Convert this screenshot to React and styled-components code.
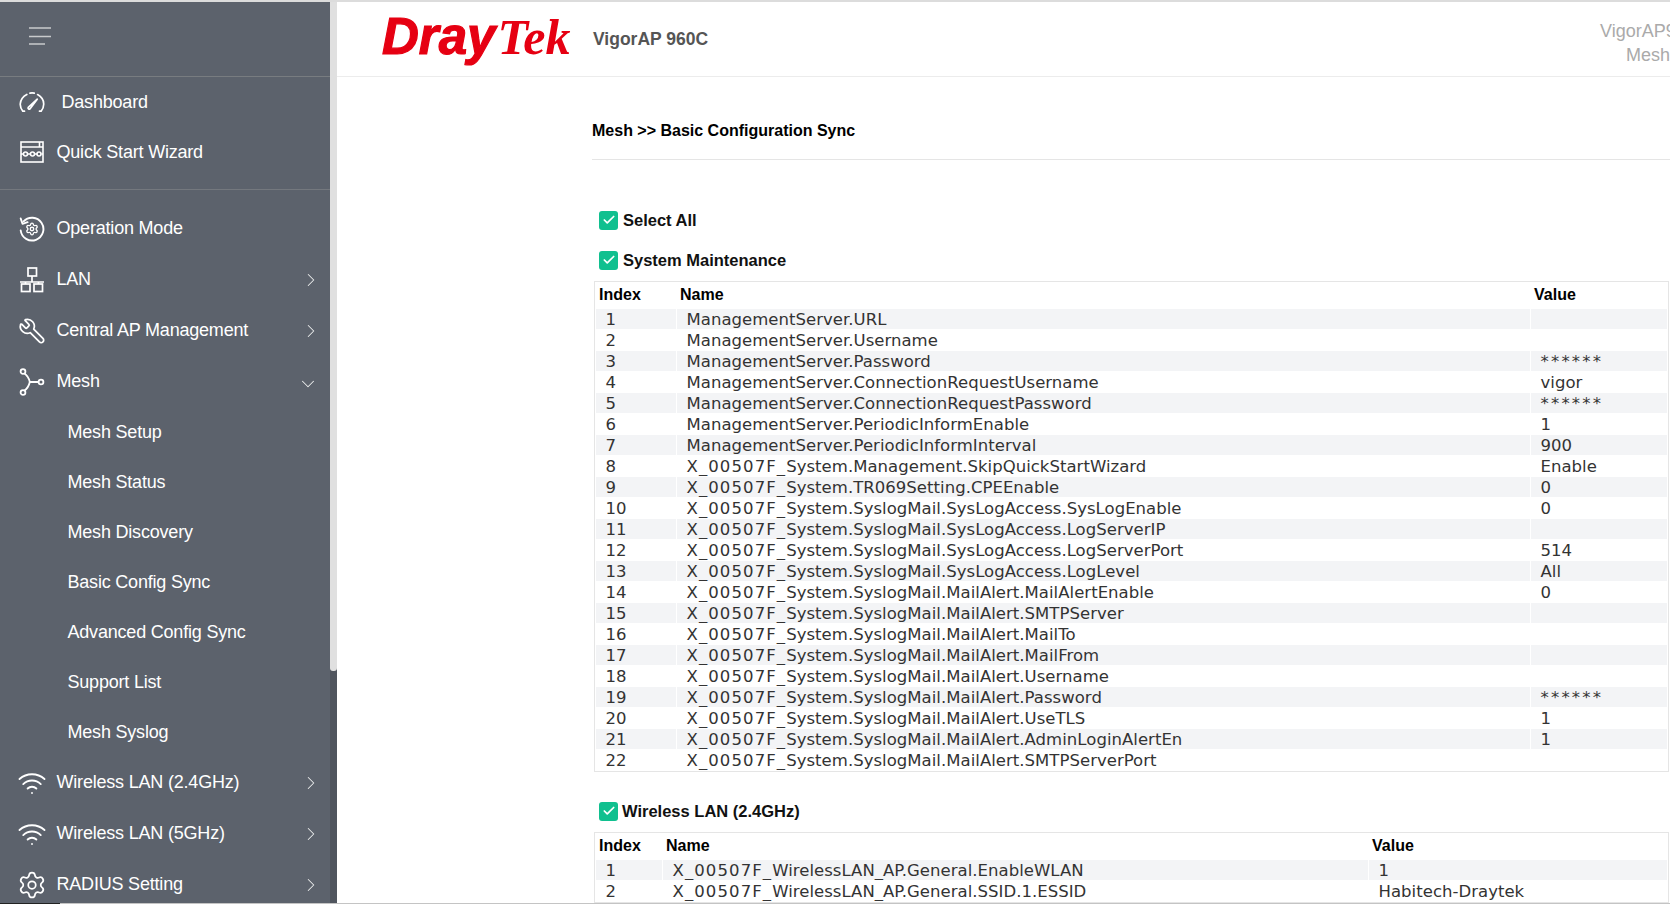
import { Wrench, Wifi, Settings, ChevronRight, ChevronDown, Check } from "lucide-react";
import styled, { createGlobalStyle } from "styled-components";

const GlobalStyle = createGlobalStyle`
  html, body {
    margin: 0;
    padding: 0;
    height: 100%;
    overflow: hidden;
    background: #fff;
    font-family: "Liberation Sans", Arial, sans-serif;
  }
`;

const Page = styled.div`
  display: flex;
  flex-direction: column;
  height: 904px;
  overflow: hidden;
  border-top: 2px solid #dcdcdc;
  box-sizing: border-box;
`;
const Body = styled.div`
  display: flex;
  flex: 1;
  min-height: 0;
`;
const BottomEdge = styled.div`
  flex: none;
  height: 1px;
  background: linear-gradient(to right, #222 60px, #c4c4c4 60px);
`;

const Sidebar = styled.aside`
  flex: none;
  width: 330px;
  background: #5c626c;
  color: #fff;
  overflow: hidden;
`;
const ScrollTrack = styled.div`
  flex: none;
  width: 7px;
  background: #50555e;
`;
const ScrollThumb = styled.div`
  height: 669px;
  background: #e0e0e0;
  border-radius: 0 0 3px 3px;
`;
const BurgerBar = styled.div`
  display: flex;
  align-items: center;
  height: 75px;
  box-sizing: border-box;
  padding: 0 0 6px 28px;
  border-bottom: 1px solid #787c80;
`;
const Group = styled.div`
  padding: ${(p) => (p.$top ? "13px" : "0")} 0 ${(p) => (p.$bottom ? "12px" : "0")};
  border-bottom: ${(p) => (p.$bottom ? "1px solid #74787e" : "none")};
`;
const NavRow = styled.div`
  display: flex;
  align-items: center;
  height: ${(p) => p.$h || 51}px;
  padding-left: 18.5px;
  padding-right: 8px;
  font-size: 18px;
  letter-spacing: -0.2px;
`;
const NavIcon = styled.span`
  display: flex;
  align-items: center;
  justify-content: center;
  width: 26px;
  height: 26px;
  margin-right: ${(p) => p.$gap || 12}px;
  svg {
    flex: none;
    transform: ${(p) => (p.$flip ? "scaleX(-1)" : "none")};
  }
`;
const NavLabel = styled.span`
  flex: 1;
`;
const ChevronWrap = styled.span`
  display: flex;
  margin: ${(p) => (p.$open ? "4px 3px 0 0" : "0")};
`;
const SubRow = styled.div`
  display: flex;
  align-items: center;
  height: 50px;
  padding-left: 67.5px;
  font-size: 18px;
  letter-spacing: -0.2px;
`;

const Main = styled.main`
  flex: 1;
  min-width: 0;
  overflow: hidden;
`;
const TopBar = styled.header`
  display: flex;
  align-items: center;
  height: 74px;
  border-bottom: 1px solid #ececec;
  padding-left: 45px;
`;
const Logo = styled.div`
  display: flex;
  align-items: baseline;
  width: 186px;
  margin-right: 25px;
  padding-bottom: 5px;
  color: #e60012;
  font-style: italic;
  font-weight: bold;
  line-height: 1;
`;
const LogoDray = styled.span`
  font-size: 51px;
  -webkit-text-stroke: 1.2px #e60012;
`;
const LogoTek = styled.span`
  font-family: "Liberation Serif", serif;
  font-size: 50px;
  margin-left: 2px;
`;
const Model = styled.div`
  font-size: 17.5px;
  font-weight: bold;
  color: #555;
`;
const Device = styled.div`
  margin-left: auto;
  width: 70px;
  flex: none;
  padding-top: 7px;
  font-size: 18px;
  line-height: 24px;
  color: #aaa;
  white-space: nowrap;
`;
const DeviceLine = styled.div`
  padding-left: ${(p) => p.$indent || 0}px;
`;

const Content = styled.div`
  margin-left: 255px;
`;
const Title = styled.h1`
  margin: 0;
  height: 83px;
  padding-top: 43px;
  box-sizing: border-box;
  border-bottom: 1px solid #e5e5e5;
  font-size: 16px;
  line-height: 22px;
  font-weight: bold;
  color: #000;
`;
const CheckRow = styled.div`
  display: flex;
  align-items: center;
  gap: ${(p) => p.$gap || 5}px;
  height: 20px;
  padding-left: 7px;
  margin-top: ${(p) => p.$top}px;
  font-size: 16.5px;
  font-weight: bold;
  color: #111;
`;
const Box = styled.span`
  display: flex;
  align-items: center;
  justify-content: center;
  width: 19px;
  height: 19px;
  border-radius: 3px;
  background: #10c08f;
  color: #fff;
`;
const Table = styled.table`
  table-layout: fixed;
  width: 1075px;
  margin: ${(p) => p.$top}px 0 0 2px;
  border: 1px solid #e5e5e5;
  border-spacing: 1px;
  box-sizing: border-box;
`;
const Th = styled.th`
  width: ${(p) => p.$w}px;
  height: 25px;
  padding: 0 0 2px 3px;
  box-sizing: border-box;
  text-align: left;
  font-size: 16px;
  font-weight: bold;
  color: #000;
`;
const Tr = styled.tr`
  background: ${(p) => (p.$odd ? "#f3f4f6" : "transparent")};
`;
const Td = styled.td`
  height: 20px;
  box-sizing: border-box;
  padding: 1px 0 0 9.5px;
  font-family: "DejaVu Sans", Verdana, sans-serif;
  font-size: 16.5px;
  letter-spacing: 0.03px;
  line-height: 19px;
  color: #333;
  white-space: nowrap;
  overflow: hidden;
`;
const Prefix = styled.span`
  letter-spacing: 1.1px;
`;
const Masked = styled.span`
  letter-spacing: 2.2px;
`;

const GaugeIcon = () => (
  <svg width="26" height="20" viewBox="0 0 26 20" fill="none" stroke="#fff" strokeWidth="1.7" strokeLinecap="round" strokeLinejoin="round">
    <path d="M5.5 19.2H3.8C1.9 16.6 1 14.2 1.3 11.6 1.7 7.8 4.2 4.3 7.8 2.4" />
    <path d="M11 1.2c1.4-.3 2.8-.3 4.2 0" />
    <path d="M18.6 2.6c3.6 2 6 5.4 6.1 9.2 .1 2.6-.8 5.1-2.6 7.4h-1.6" />
    <path d="M9.3 15.3c-.8 1.2.6 2.4 1.8 1.5L18.2 7.2 9.3 15.3z" />
  </svg>
);

const WizardIcon = () => (
  <svg width="24" height="22" viewBox="0 0 24 22" fill="none" stroke="#fff" strokeWidth="1.6">
    <rect x="1" y="1" width="22" height="20" />
    <path d="M1 6h22M19.5 1v5" />
    <path d="M1 13h2M8 13h2M15 13h2M21.5 13H23" />
    <circle cx="5.5" cy="13" r="2" />
    <circle cx="12.5" cy="13" r="2" />
    <circle cx="19" cy="13" r="2" />
  </svg>
);

const ModeIcon = () => (
  <svg width="26" height="26" viewBox="0 0 26 26" fill="none" stroke="#fff" strokeWidth="1.9" strokeLinecap="round" strokeLinejoin="round">
    <path d="M4.6 5.4A11.4 11.4 0 1 1 1.7 14.5" />
    <path d="M1.7 2.5 3.5 7.8 8.6 6.2" />
    <Settings x="6" y="6" width="14" height="14" strokeWidth="2.2" />
  </svg>
);

const LanIcon = () => (
  <svg width="26" height="26" viewBox="0 0 26 26" fill="none" stroke="#fff" strokeWidth="1.7">
    <rect x="9" y="1" width="8.5" height="8" />
    <path d="M13 9v6M1 15h24" />
    <rect x="2.5" y="17" width="8.5" height="7.5" />
    <rect x="15" y="17" width="8.5" height="7.5" />
    <path d="M6.5 15v2M19.5 15v2" />
  </svg>
);

const MeshIcon = () => (
  <svg width="26" height="28" viewBox="0 0 26 28" fill="none" stroke="#fff" strokeWidth="1.8">
    <circle cx="4" cy="3.5" r="2.4" />
    <circle cx="4" cy="24.5" r="2.4" />
    <circle cx="22" cy="14" r="2.4" />
    <path d="M5.5 5.5C8.5 7.5 10 10.5 10.8 14 10 17.5 8.5 20.5 5.5 22.5M10.8 14h8.8" />
  </svg>
);

const MenuIcon = () => (
  <svg width="24" height="20" viewBox="0 0 24 20" fill="none" stroke="#c8cacc" strokeWidth="1.6">
    <path d="M1 2h22M1 10.5h22M1 18h16" />
  </svg>
);

const Chevron = ({ open }) => (
  <ChevronWrap $open={open}>
    {open ? (
      <ChevronDown size={22} strokeWidth={1.1} color="#eceded" />
    ) : (
      <ChevronRight size={22} strokeWidth={1.1} color="#eceded" />
    )}
  </ChevronWrap>
);

const CheckBox = () => (
  <Box>
    <Check size={14} strokeWidth={3} />
  </Box>
);

const SUB_ITEMS = ["Mesh Setup", "Mesh Status", "Mesh Discovery", "Basic Config Sync", "Advanced Config Sync", "Support List", "Mesh Syslog"];

const SYSTEM_ROWS = [
  ["ManagementServer.URL", ""],
  ["ManagementServer.Username", ""],
  ["ManagementServer.Password", "******"],
  ["ManagementServer.ConnectionRequestUsername", "vigor"],
  ["ManagementServer.ConnectionRequestPassword", "******"],
  ["ManagementServer.PeriodicInformEnable", "1"],
  ["ManagementServer.PeriodicInformInterval", "900"],
  ["X_00507F_System.Management.SkipQuickStartWizard", "Enable"],
  ["X_00507F_System.TR069Setting.CPEEnable", "0"],
  ["X_00507F_System.SyslogMail.SysLogAccess.SysLogEnable", "0"],
  ["X_00507F_System.SyslogMail.SysLogAccess.LogServerIP", ""],
  ["X_00507F_System.SyslogMail.SysLogAccess.LogServerPort", "514"],
  ["X_00507F_System.SyslogMail.SysLogAccess.LogLevel", "All"],
  ["X_00507F_System.SyslogMail.MailAlert.MailAlertEnable", "0"],
  ["X_00507F_System.SyslogMail.MailAlert.SMTPServer", ""],
  ["X_00507F_System.SyslogMail.MailAlert.MailTo", ""],
  ["X_00507F_System.SyslogMail.MailAlert.MailFrom", ""],
  ["X_00507F_System.SyslogMail.MailAlert.Username", ""],
  ["X_00507F_System.SyslogMail.MailAlert.Password", "******"],
  ["X_00507F_System.SyslogMail.MailAlert.UseTLS", "1"],
  ["X_00507F_System.SyslogMail.MailAlert.AdminLoginAlertEn", "1"],
  ["X_00507F_System.SyslogMail.MailAlert.SMTPServerPort", ""],
];

const WIRELESS_ROWS = [
  ["X_00507F_WirelessLAN_AP.General.EnableWLAN", "1"],
  ["X_00507F_WirelessLAN_AP.General.SSID.1.ESSID", "Habitech-Draytek"],
];

const PREFIX = "X_00507F_";

const NameText = ({ name }) =>
  name.startsWith(PREFIX) ? (
    <>
      <Prefix>{PREFIX}</Prefix>
      {name.slice(PREFIX.length)}
    </>
  ) : (
    name
  );

const ConfigTable = ({ rows, top, widths }) => (
  <Table $top={top}>
    <thead>
      <tr>
        <Th $w={widths[0]}>Index</Th>
        <Th $w={widths[1]}>Name</Th>
        <Th>Value</Th>
      </tr>
    </thead>
    <tbody>
      {rows.map(([name, value], i) => (
        <Tr key={name} $odd={i % 2 === 0}>
          <Td>{i + 1}</Td>
          <Td><NameText name={name} /></Td>
          <Td>{value === "******" ? <Masked>{value}</Masked> : value}</Td>
        </Tr>
      ))}
    </tbody>
  </Table>
);

const App = () => (
  <Page>
    <GlobalStyle />
    <Body>
      <Sidebar>
        <BurgerBar>
          <MenuIcon />
        </BurgerBar>
        <Group $bottom>
          <NavRow $h={50}>
            <NavIcon $gap={17}><GaugeIcon /></NavIcon>
            <NavLabel>Dashboard</NavLabel>
          </NavRow>
          <NavRow $h={50}>
            <NavIcon><WizardIcon /></NavIcon>
            <NavLabel>Quick Start Wizard</NavLabel>
          </NavRow>
        </Group>
        <Group $top>
          <NavRow>
            <NavIcon><ModeIcon /></NavIcon>
            <NavLabel>Operation Mode</NavLabel>
          </NavRow>
          <NavRow>
            <NavIcon><LanIcon /></NavIcon>
            <NavLabel>LAN</NavLabel>
            <Chevron />
          </NavRow>
          <NavRow>
            <NavIcon $flip><Wrench size={28} strokeWidth={1.5} /></NavIcon>
            <NavLabel>Central AP Management</NavLabel>
            <Chevron />
          </NavRow>
          <NavRow>
            <NavIcon><MeshIcon /></NavIcon>
            <NavLabel>Mesh</NavLabel>
            <Chevron open />
          </NavRow>
          {SUB_ITEMS.map((item) => (
            <SubRow key={item}>{item}</SubRow>
          ))}
          <NavRow>
            <NavIcon><Wifi size={30} strokeWidth={1.5} /></NavIcon>
            <NavLabel>Wireless LAN (2.4GHz)</NavLabel>
            <Chevron />
          </NavRow>
          <NavRow>
            <NavIcon><Wifi size={30} strokeWidth={1.5} /></NavIcon>
            <NavLabel>Wireless LAN (5GHz)</NavLabel>
            <Chevron />
          </NavRow>
          <NavRow>
            <NavIcon><Settings size={30} strokeWidth={1.4} /></NavIcon>
            <NavLabel>RADIUS Setting</NavLabel>
            <Chevron />
          </NavRow>
        </Group>
      </Sidebar>
      <ScrollTrack>
        <ScrollThumb />
      </ScrollTrack>
      <Main>
        <TopBar>
          <Logo>
            <LogoDray>Dray</LogoDray>
            <LogoTek>Tek</LogoTek>
          </Logo>
          <Model>VigorAP 960C</Model>
          <Device>
            <DeviceLine>VigorAP960C</DeviceLine>
            <DeviceLine $indent={26}>Mesh</DeviceLine>
          </Device>
        </TopBar>
        <Content>
          <Title>Mesh &gt;&gt; Basic Configuration Sync</Title>
          <CheckRow $top={50}>
            <CheckBox />
            Select All
          </CheckRow>
          <CheckRow $top={20}>
            <CheckBox />
            System Maintenance
          </CheckRow>
          <ConfigTable rows={SYSTEM_ROWS} top={11} widths={[80, 853]} />
          <CheckRow $top={29} $gap={4}>
            <CheckBox />
            Wireless LAN (2.4GHz)
          </CheckRow>
          <ConfigTable rows={WIRELESS_ROWS} top={11} widths={[66, 705]} />
        </Content>
      </Main>
    </Body>
    <BottomEdge />
  </Page>
);

export default App;
